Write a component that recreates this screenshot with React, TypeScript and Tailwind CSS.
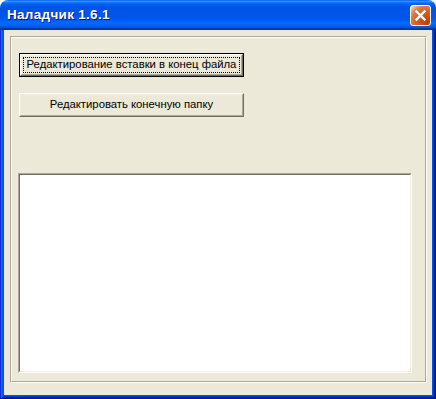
import React from "react";

function CloseButton() {
  return (
    <div className="w-[21px] h-[21px] rounded-[3px] border border-white bg-[radial-gradient(circle_at_85%_85%,#c63c04_0%,#dd5d28_50%,#e2764a_70%,#f3b293_88%,#ffffff_100%)] flex items-center justify-center">
      <svg width="13" height="13" viewBox="0 0 13 13">
        <path d="M2.5 2.5 L10.5 10.5 M10.5 2.5 L2.5 10.5" stroke="#ffffff" strokeWidth="2.4" strokeLinecap="square" />
      </svg>
    </div>
  );
}

export default function App() {
  const font = { fontFamily: '"Liberation Sans", Arial, sans-serif' };
  return (
    <div className="w-[436px] h-[399px] flex flex-col" style={font}>
      {/* Title bar */}
      <div className="h-[30px] shrink-0 rounded-t-[8px] bg-[linear-gradient(to_bottom,#0058ee_0%,#3593ff_4%,#288eff_6%,#127dff_8%,#036ffc_10%,#0262ee_14%,#0057e5_20%,#0054e3_24%,#0055eb_56%,#005bf5_66%,#026afe_76%,#0062ef_86%,#0052d6_92%,#0040ab_94%,#003092_100%)] flex items-center justify-between pl-[7px] pr-[5px]">
        <span
          className="text-white font-bold text-[13.5px] leading-none [text-shadow:1px_1px_#0f1089] tracking-[0.3px]"
          style={{ fontFamily: '"Liberation Sans", "DejaVu Sans", sans-serif' }}
        >
          Наладчик 1.6.1
        </span>
        <CloseButton />
      </div>
      {/* Window body */}
      <div className="flex-1 flex flex-col bg-[#0054e3] px-[4px] pb-[4px] shadow-[inset_1px_0_#0831d9,inset_-1px_0_#00138c,inset_0_-1px_#00138c,inset_2px_0_#166aee,inset_-2px_0_#001ea0,inset_0_-2px_#001ea0,inset_3px_0_#0855dd,inset_-3px_0_#003bda,inset_0_-3px_#003bda]">
        <div className="flex-1 bg-[#ece9d8] pt-[6px] pl-[6px] pr-[5px] pb-[12px] flex flex-col">
          {/* Etched frame */}
          <div className="flex-1 flex flex-col border border-t-[#aca899] border-l-[#aca899] border-r-white border-b-white">
            <div className="flex-1 flex flex-col border border-t-white border-l-white border-r-[#aca899] border-b-[#aca899] pt-[15px] pl-[7px]">
              {/* Button 1 (default, focused) */}
              <div className="w-[225px] h-[24px] border border-black">
                <div className="w-full h-full border border-t-white border-l-white border-r-[#716f64] border-b-[#716f64]">
                  <div className="w-full h-full border border-t-[#f1efe2] border-l-[#f1efe2] border-r-[#aca899] border-b-[#aca899] p-px">
                    <div className="w-full h-full border border-dotted border-black flex items-center justify-center text-[11.3px] text-black leading-none">
                      Редактирование вставки в конец файла
                    </div>
                  </div>
                </div>
              </div>
              {/* Button 2 */}
              <div className="mt-[16px] w-[225px] h-[24px] border border-t-white border-l-white border-r-[#716f64] border-b-[#716f64]">
                <div className="w-full h-full border border-t-[#f1efe2] border-l-[#f1efe2] border-r-[#aca899] border-b-[#aca899] flex items-center justify-center text-[11.3px] text-black leading-none">
                  Редактировать конечную папку
                </div>
              </div>
              {/* Text box */}
              <div className="mt-[56px] -ml-px w-[394px] h-[200px] border border-t-[#aca899] border-l-[#aca899] border-r-white border-b-white">
                <div className="w-full h-full border border-t-[#716f64] border-l-[#716f64] border-r-[#f1efe2] border-b-[#f1efe2] bg-white" />
              </div>
            </div>
          </div>
        </div>
      </div>
    </div>
  );
}
